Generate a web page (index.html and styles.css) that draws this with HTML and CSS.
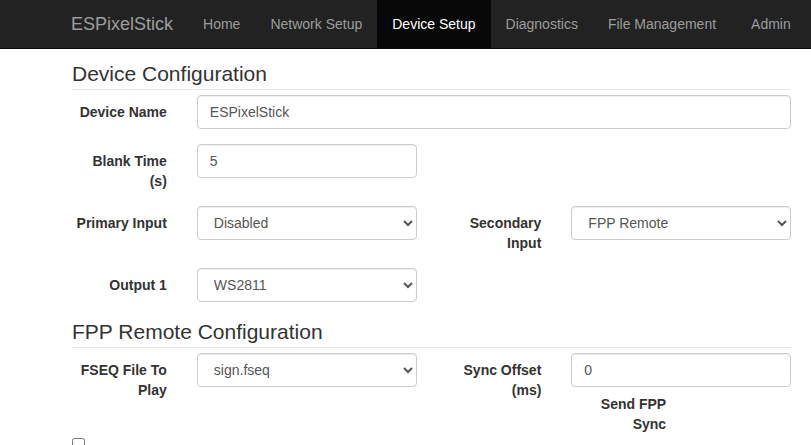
FILE: index.html
```html
<!DOCTYPE html>
<html lang="en">
<head>
<meta charset="utf-8">
<title>ESPixelStick - Device Setup</title>
<link rel="stylesheet" href="styles.css">
</head>
<body>
<nav class="navbar">
  <div class="navbar-inner">
    <a class="brand" href="#">ESPixelStick</a>
    <ul class="nav">
      <li><a href="#">Home</a></li>
      <li><a href="#">Network Setup</a></li>
      <li class="active"><a href="#">Device Setup</a></li>
      <li><a href="#">Diagnostics</a></li>
      <li><a href="#">File Management</a></li>
      <li class="nav-right"><a href="#">Admin</a></li>
    </ul>
  </div>
</nav>

<main class="container">
  <fieldset class="section">
    <legend class="legend">Device Configuration</legend>
    <div class="form-grid">
      <label class="lbl">Device Name</label>
      <div class="ctl span-3"><input class="form-control" type="text" value="ESPixelStick"></div>

      <label class="lbl">Blank Time (s)</label>
      <div class="ctl"><input class="form-control" type="text" value="5"></div>
      <div class="filler"></div>

      <label class="lbl">Primary Input</label>
      <div class="ctl">
        <select class="form-control"><option>Disabled</option></select>
      </div>
      <label class="lbl">Secondary Input</label>
      <div class="ctl">
        <select class="form-control"><option>FPP Remote</option></select>
      </div>

      <label class="lbl">Output 1</label>
      <div class="ctl">
        <select class="form-control"><option>WS2811</option></select>
      </div>
      <div class="filler"></div>
    </div>
  </fieldset>

  <fieldset class="section">
    <legend class="legend">FPP Remote Configuration</legend>
    <div class="form-grid tight">
      <label class="lbl">FSEQ File To Play</label>
      <div class="ctl">
        <select class="form-control"><option>sign.fseq</option></select>
      </div>
      <label class="lbl">Sync Offset (ms)</label>
      <div class="ctl">
        <input class="form-control" type="text" value="0">
        <label class="lbl sub-lbl">Send FPP Sync</label>
      </div>
    </div>
    <input class="check" type="checkbox">
  </fieldset>
</main>
</body>
</html>
```
FILE: styles.css
```css
html, body {
  margin: 0;
  padding: 0;
}

body {
  font-family: "Liberation Sans", Arial, Helvetica, sans-serif;
  font-size: 14px;
  line-height: 20px;
  color: #333;
  background: #fff;
  overflow: hidden;
}

/* Navbar */
.navbar {
  background: #222;
  border-bottom: 1px solid #080808;
  height: 48px;
}

.navbar-inner {
  margin-left: 56px;
  display: flex;
  align-items: stretch;
  height: 48px;
}

.brand {
  display: block;
  padding: 14px 15px;
  font-size: 18px;
  line-height: 20px;
  color: #9d9d9d;
  text-decoration: none;
}

.nav {
  display: flex;
  list-style: none;
  margin: 0;
  padding: 0;
}

.nav li a {
  display: block;
  padding: 14px 15px;
  line-height: 20px;
  color: #9d9d9d;
  text-decoration: none;
  height: 20px;
}

.nav li.active a {
  background: #080808;
  color: #fff;
}

.nav li.nav-right {
  margin-left: 5px;
}

/* Content */
.container {
  margin-left: 57px;
  width: 749px;
  padding: 10px 15px 0;
  box-sizing: border-box;
}

.section {
  border: 0;
  margin: 0;
  padding: 0;
  min-width: 0;
}

.legend {
  display: block;
  width: 100%;
  padding: 0;
  margin: 0 0 5px;
  font-size: 21px;
  line-height: 30px;
  color: #333;
  border-bottom: 1px solid #e5e5e5;
}

.form-grid {
  display: grid;
  grid-template-columns: 2fr 4fr 2fr 4fr;
  row-gap: 15px;
  margin: 0 -15px 15px;
  align-items: start;
}

.form-grid.tight {
  margin-bottom: 0;
}

.lbl {
  display: block;
  padding: 7px 15px 0;
  text-align: right;
  font-weight: bold;
  line-height: 20px;
}

.ctl {
  padding: 0 15px;
  min-width: 0;
}

.span-3 {
  grid-column: span 3;
}

.filler {
  grid-column: span 2;
}

.sub-lbl {
  box-sizing: border-box;
  width: calc(50% + 15px);
  margin-left: -15px;
}

.form-control {
  display: block;
  width: 100%;
  height: 34px;
  padding: 6px 12px;
  box-sizing: border-box;
  font-family: inherit;
  font-size: 14px;
  line-height: 20px;
  color: #555;
  background-color: #fff;
  border: 1px solid #ccc;
  border-radius: 4px;
  box-shadow: inset 0 1px 1px rgba(0, 0, 0, 0.075);
  margin: 0;
}

.check {
  display: block;
  width: 13px;
  height: 13px;
  margin: 4px 0 0;
}
```
